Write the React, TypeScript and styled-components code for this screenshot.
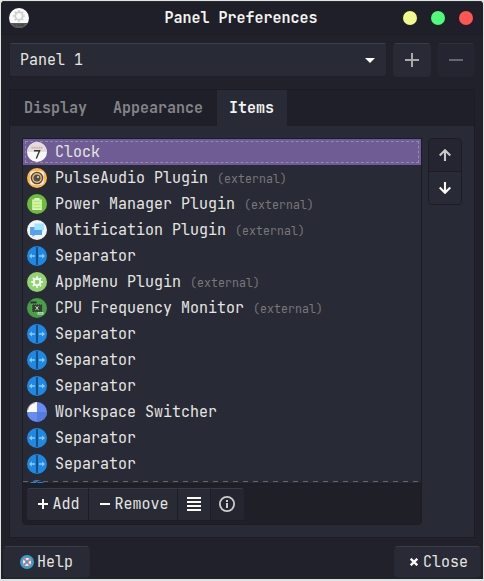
import React from "react";
import styled, { createGlobalStyle } from "styled-components";

const Global = createGlobalStyle`
  *, *::before, *::after { box-sizing: border-box; }
  body { margin: 0; background: #dfe4e1; overflow: hidden; }
  button { font: inherit; color: inherit; padding: 0; margin: 0; }
  svg { display: block; flex: none; }
`;

const Window = styled.main`
  width: 482px;
  height: 578px;
  margin: 1px;
  display: flex;
  flex-direction: column;
  overflow: hidden;
  background: #20212b;
  border-radius: 4px 4px 0 0;
  color: #e6e6e1;
  font: 15px/20px "JetBrains Mono", "DejaVu Sans Mono", monospace;
  white-space: pre;
`;

const TitleBar = styled.header`
  height: 34px;
  flex: none;
  display: grid;
  grid-template-columns: 80px 1fr 80px;
  align-items: center;
  padding: 0 10px 0 8px;
  background: #1e1f29;
  border-top: 1px solid #292a33;
  border-bottom: 1px solid #1c1d26;
`;

const Title = styled.h1`
  margin: 0;
  font-size: 15px;
  line-height: 20px;
  font-weight: bold;
  text-align: center;
  color: #f4f4ef;
`;

const WindowControls = styled.div`
  display: flex;
  justify-content: flex-end;
  gap: 14px;
`;

const ControlDot = styled.button<{ $color: string }>`
  width: 14px;
  height: 14px;
  border: 0;
  border-radius: 50%;
  background: ${(p) => p.$color};
`;

const PanelBar = styled.div`
  display: flex;
  flex: none;
  align-items: flex-start;
  gap: 6px;
  height: 54px;
  padding: 8px 7px 0 8px;
`;

const PanelSelect = styled.button`
  display: flex;
  flex: none;
  align-items: center;
  justify-content: space-between;
  width: 378px;
  height: 34px;
  padding: 0 11px 0 10px;
  background: #282a36;
  border: 1px solid #1e1f28;
  border-top-color: #3c3e4a;
  border-radius: 3px;
`;

const SquareButton = styled.button<{ $disabled?: boolean }>`
  display: grid;
  flex: none;
  place-items: center;
  width: 38px;
  height: 34px;
  color: ${(p) => (p.$disabled ? "#666771" : "#a9a9aa")};
  background: ${(p) => (p.$disabled ? "#242530" : "#282a36")};
  border: 1px solid ${(p) => (p.$disabled ? "#22232d" : "#272934")};
  border-top-color: ${(p) => (p.$disabled ? "#2e303a" : "#393b46")};
  border-radius: 4px;
`;

const Notebook = styled.section`
  width: 466px;
  height: 449px;
  flex: none;
  margin-left: 8px;
  border: 1px solid #1b1c25;
  background: #282a36;
`;

const TabList = styled.nav`
  display: flex;
  height: 36px;
  background: #1e1f29;
`;

const Tab = styled.button<{ $active?: boolean }>`
  height: 36px;
  padding: 0 ${(p) => (p.$active ? 12 : 13)}px;
  border: 0;
  font-weight: bold;
  color: ${(p) => (p.$active ? "#f4f4ef" : "#838487")};
  background: ${(p) => (p.$active ? "#282a36" : "transparent")};
  &:first-child { padding-left: 14px; }
  &:nth-child(2) { padding-right: 14px; }
  &:last-child { padding-right: 13px; }
`;

const TabPage = styled.div`
  display: flex;
  align-items: flex-start;
  gap: 6px;
  padding: 12px;
`;

const ListFrame = styled.div`
  width: 400px;
  height: 387px;
  display: flex;
  flex-direction: column;
  border: 1px solid #1b1c25;
  border-radius: 0 0 4px 4px;
  overflow: hidden;
`;

const ItemList = styled.ul`
  position: relative;
  height: 344px;
  flex: none;
  margin: 0;
  padding: 0;
  list-style: none;
  overflow: hidden;
  &::after {
    content: "";
    position: absolute;
    left: 0;
    right: 0;
    bottom: 1px;
    height: 1px;
    background: repeating-linear-gradient(90deg, #62636b 0 5px, #242631 5px 10px);
  }
`;

const ItemRow = styled.li<{ $selected?: boolean }>`
  display: flex;
  align-items: center;
  height: 26px;
  padding: 0 4px;
  background: ${(p) => (p.$selected ? "#6f5c94" : "transparent")};
  outline: ${(p) => (p.$selected ? "1px dashed #9686b1" : "none")};
  outline-offset: -3px;
`;

const ItemName = styled.span`
  margin-left: 8px;
  line-height: 26px;
  height: 26px;
`;

const ItemNote = styled.small`
  margin-left: 9px;
  padding-top: 2px;
  font-size: 11.65px;
  color: #777879;
`;

const ListToolbar = styled.div`
  flex: 1;
  display: flex;
  align-items: flex-start;
  padding: 4px;
  background: #1e1f27;
  border-top: 1px solid #1b1c24;
`;

const ToolButton = styled.button<{ $width: number; $iconOnly?: boolean }>`
  display: flex;
  align-items: center;
  justify-content: center;
  gap: 4px;
  width: ${(p) => p.$width}px;
  height: 33px;
  padding: 0 0 1px ${(p) => (p.$iconOnly ? 0 : 2)}px;
  background: #282a36;
  border: 1px solid #1c1d26;
  border-left-width: 0;
  border-top-color: #393b46;
  &:first-child { border-radius: 3px 0 0 3px; }
  &:last-child { border-radius: 0 3px 3px 0; background: #242530; border-right-color: #252630; }
`;

const MoveButtons = styled.div`
  width: 34px;
  height: 67px;
  display: grid;
  grid-template-rows: 33px 32px;
  border: 1px solid #1b1c25;
  border-radius: 4px;
  overflow: hidden;
`;

const MoveButton = styled.button<{ $dim?: boolean }>`
  display: grid;
  place-items: center;
  border: 0;
  border-bottom: ${(p) => (p.$dim ? "1px solid #1b1c25" : "0")};
  color: ${(p) => (p.$dim ? "#c9c9c9" : "#fbfbf4")};
  background: ${(p) => (p.$dim ? "#242530" : "#282a36")};
`;

const ActionBar = styled.footer`
  display: flex;
  justify-content: space-between;
  padding: 8px 2px 0;
`;

const ActionButton = styled.button<{ $gap: number; $shift?: number }>`
  display: flex;
  align-items: center;
  justify-content: center;
  gap: ${(p) => p.$gap}px;
  width: 87px;
  height: 32px;
  padding-left: ${(p) => p.$shift ?? 0}px;
  background: #282a36;
  border: 1px solid #252732;
  border-top-color: #393b46;
  border-radius: 4px;
`;

const gearTeeth = [0, 45, 90, 135, 180, 225, 270, 315];

const Gear = ({ color, y = 10, r = 3.6, tooth = 6 }: { color: string; y?: number; r?: number; tooth?: number }) => (
  <g transform={`translate(10 ${y})`}>
    <circle r={r} fill="none" stroke={color} strokeWidth="1.8" />
    {gearTeeth.map((a) => (
      <path key={a} d={`M0-${r}V-${tooth}`} stroke={color} strokeWidth="1.7" transform={`rotate(${a})`} />
    ))}
  </g>
);

const AppIcon = () => (
  <svg width="20" height="20" viewBox="0 0 20 20">
    <circle cx="10" cy="10" r="10" fill="#fafafa" />
    <path d="M1.2 15h17.6A10 10 0 0 1 1.2 15Z" fill="#595959" />
    <Gear color="#d0d0d0" y={8} r={3.8} />
    <path d="M5.5 17h1m2 0h1m1 0h1m1 0h2" stroke="#292929" />
  </svg>
);

type IconKind = "clock" | "audio" | "power" | "notify" | "separator" | "menu" | "cpu" | "workspace";

const iconColors: Record<IconKind, string> = {
  clock: "#f8f8f8",
  audio: "#ffb74d",
  power: "#6dbd3c",
  notify: "#f4f4f4",
  separator: "#1e88e5",
  menu: "#91d36e",
  cpu: "#43a047",
  workspace: "#668bf5",
};

const iconArt: Record<IconKind, React.ReactNode> = {
  clock: (
    <>
      <path d="M0 10a10 10 0 0 1 20 0Z" fill="#dedede" />
      <path d="M4.5 5.8h11" stroke="#e5a5a5" strokeWidth="2" strokeDasharray="1.4 .5" />
      <path d="M7 8.8h5.6L9.3 16.5" fill="none" stroke="#353535" strokeWidth="1.4" />
    </>
  ),
  audio: (
    <>
      <rect x="3.2" y="3.2" width="13.6" height="13.6" rx="3" fill="#f7f0e6" />
      <circle cx="10" cy="10" r="5.6" fill="#ffb74d" stroke="#4d4d50" strokeWidth="1.4" />
      <circle cx="10" cy="10" r="3.5" fill="#465159" />
      <circle cx="11" cy="9" r="1" fill="#dce2e5" />
    </>
  ),
  power: (
    <>
      <path d="M7.5 4h5v1.4h2.2V16H5.3V5.4h2.2Z" fill="#eef8df" />
      <path d="M6.2 7.5h7.6m-7.6 3h7.6m-7.6 3h7.6" stroke="#b2ed68" strokeWidth="1.8" />
    </>
  ),
  notify: (
    <>
      <path d="M7.5 3.5h9.5v6.5h-1v2l-2-2H7.5Z" fill="#9ce7ff" />
      <path d="M3 7h4.5v3H15v5H8l-2.5 2v-2H3Z" fill="#55a2f3" />
    </>
  ),
  separator: (
    <>
      <rect x="9" y="1" width="2" height="18" fill="#174e7e" />
      <path d="M3.3 10H8M12 10h4.7" stroke="#91c8f5" strokeWidth="1.4" />
      <path d="m2 10 3-2.5v5ZM18 10l-3-2.5v5Z" fill="#91c8f5" />
    </>
  ),
  menu: <Gear color="#fff" r={3.2} tooth={5.8} />,
  cpu: (
    <>
      <path d="M3.4 3.5h6.2v2H3.4Z" fill="#26362d" />
      <path d="M5 6.2h10.5v8H5Z" fill="#304039" stroke="#a6c33c" strokeWidth=".7" strokeDasharray="1 1" />
      <path d="m8.4 8.2 3.2 4m0-4-3.2 4" stroke="#c5d0c9" />
      <path d="M10.5 14.2h6v2.4h-6Z" fill="#c9e8ca" />
      <path d="M11.5 15.4h4" stroke="#61a865" strokeWidth=".8" />
    </>
  ),
  workspace: (
    <>
      <path d="M10 0v10H0A10 10 0 0 1 10 0Z" fill="#fafafa" />
      <path d="M10 10h10a10 10 0 0 1-10 10Z" fill="#567cdd" />
      <path d="M.6 8A9.5 9.5 0 0 1 8 .6" fill="none" stroke="#777" strokeWidth=".8" />
    </>
  ),
};

const ItemIcon = ({ kind }: { kind: IconKind }) => (
  <svg width="20" height="20" viewBox="0 0 20 20">
    <circle cx="10" cy="10" r="10" fill={iconColors[kind]} />
    {iconArt[kind]}
  </svg>
);

const ArrowIcon = ({ down }: { down?: boolean }) => (
  <svg width="12" height="12" viewBox="0 0 12 12" fill="none" stroke="currentColor" strokeWidth="2.1">
    <path d={down ? "M6 0v10.5M.7 5.5 6 10.8l5.3-5.3" : "M6 12V1.5M.7 6.5 6 1.2l5.3 5.3"} />
  </svg>
);

const HelpIcon = () => (
  <svg width="14" height="14" viewBox="0 0 14 14">
    <circle cx="7" cy="7" r="7" fill="#3c9dcc" />
    <circle cx="7" cy="7" r="3" fill="none" stroke="#f5f0ed" strokeWidth="2.2" />
    <circle cx="7" cy="7" r="3" fill="none" stroke="#ef6660" strokeWidth="2.2" strokeDasharray="2.356 2.356" strokeDashoffset="1.178" transform="rotate(45 7 7)" />
  </svg>
);

const items: { name: string; icon: IconKind; external?: boolean }[] = [
  { name: "Clock", icon: "clock" },
  { name: "PulseAudio Plugin", icon: "audio", external: true },
  { name: "Power Manager Plugin", icon: "power", external: true },
  { name: "Notification Plugin", icon: "notify", external: true },
  { name: "Separator", icon: "separator" },
  { name: "AppMenu Plugin", icon: "menu", external: true },
  { name: "CPU Frequency Monitor", icon: "cpu", external: true },
  { name: "Separator", icon: "separator" },
  { name: "Separator", icon: "separator" },
  { name: "Separator", icon: "separator" },
  { name: "Workspace Switcher", icon: "workspace" },
  { name: "Separator", icon: "separator" },
  { name: "Separator", icon: "separator" },
  { name: "", icon: "separator" },
];

export default function App() {
  return (
    <>
      <Global />
      <Window>
        <TitleBar>
          <AppIcon />
          <Title>Panel Preferences</Title>
          <WindowControls>
            <ControlDot $color="#f1fa8c" aria-label="Minimize" />
            <ControlDot $color="#50fa7b" aria-label="Maximize" />
            <ControlDot $color="#ff5555" aria-label="Close window" />
          </WindowControls>
        </TitleBar>
        <PanelBar>
          <PanelSelect>
            Panel 1
            <svg width="10" height="5" viewBox="0 0 10 5"><path d="M0 0h10L5 5Z" fill="#fff" /></svg>
          </PanelSelect>
          <SquareButton aria-label="Add panel">
            <svg width="14" height="14" viewBox="0 0 14 14" stroke="currentColor" strokeWidth="2"><path d="M0 7h14M7 0v14" /></svg>
          </SquareButton>
          <SquareButton $disabled aria-label="Remove panel">
            <svg width="14" height="14" viewBox="0 0 14 14" stroke="currentColor" strokeWidth="2"><path d="M0 7h14" /></svg>
          </SquareButton>
        </PanelBar>
        <Notebook>
          <TabList>
            <Tab>Display</Tab>
            <Tab>Appearance</Tab>
            <Tab $active>Items</Tab>
          </TabList>
          <TabPage>
            <ListFrame>
              <ItemList>
                {items.map((item, i) => (
                  <ItemRow key={i} $selected={i === 0}>
                    <ItemIcon kind={item.icon} />
                    <ItemName>{item.name}</ItemName>
                    {item.external && <ItemNote>(external)</ItemNote>}
                  </ItemRow>
                ))}
              </ItemList>
              <ListToolbar>
                <ToolButton $width={62}>
                  <svg width="11" height="10" viewBox="-1 0 11 10" stroke="#fbfbf4" strokeWidth="2"><path d="M0 5h10M5 0v10" /></svg>
                  Add
                </ToolButton>
                <ToolButton $width={89}>
                  <svg width="11" height="10" viewBox="-1 0 11 10" stroke="#fbfbf4" strokeWidth="2"><path d="M0 5h10" /></svg>
                  Remove
                </ToolButton>
                <ToolButton $width={33} $iconOnly aria-label="Edit item">
                  <svg width="14" height="14" viewBox="0 0 14 14" stroke="#fbfbf4" strokeWidth="2"><path d="M0 1h14M0 5h14M0 9h14M0 13h14" /></svg>
                </ToolButton>
                <ToolButton $width={33} $iconOnly aria-label="About item">
                  <svg width="16" height="16" viewBox="0 0 16 16" stroke="#cdcdca" fill="none">
                    <circle cx="8" cy="8" r="7.1" strokeWidth="1.8" />
                    <path d="M8 4v2M8 7v5" strokeWidth="2" />
                  </svg>
                </ToolButton>
              </ListToolbar>
            </ListFrame>
            <MoveButtons>
              <MoveButton $dim aria-label="Move up"><ArrowIcon /></MoveButton>
              <MoveButton aria-label="Move down"><ArrowIcon down /></MoveButton>
            </MoveButtons>
          </TabPage>
        </Notebook>
        <ActionBar>
          <ActionButton $gap={3}>
            <HelpIcon />
            Help
          </ActionButton>
          <ActionButton $gap={5} $shift={3}>
            <svg width="8" height="8" viewBox="0 0 8 8" stroke="#fbfbf4" strokeWidth="2.3"><path d="m.7.7 6.6 6.6m0-6.6L.7 7.3" /></svg>
            Close
          </ActionButton>
        </ActionBar>
      </Window>
    </>
  );
}
